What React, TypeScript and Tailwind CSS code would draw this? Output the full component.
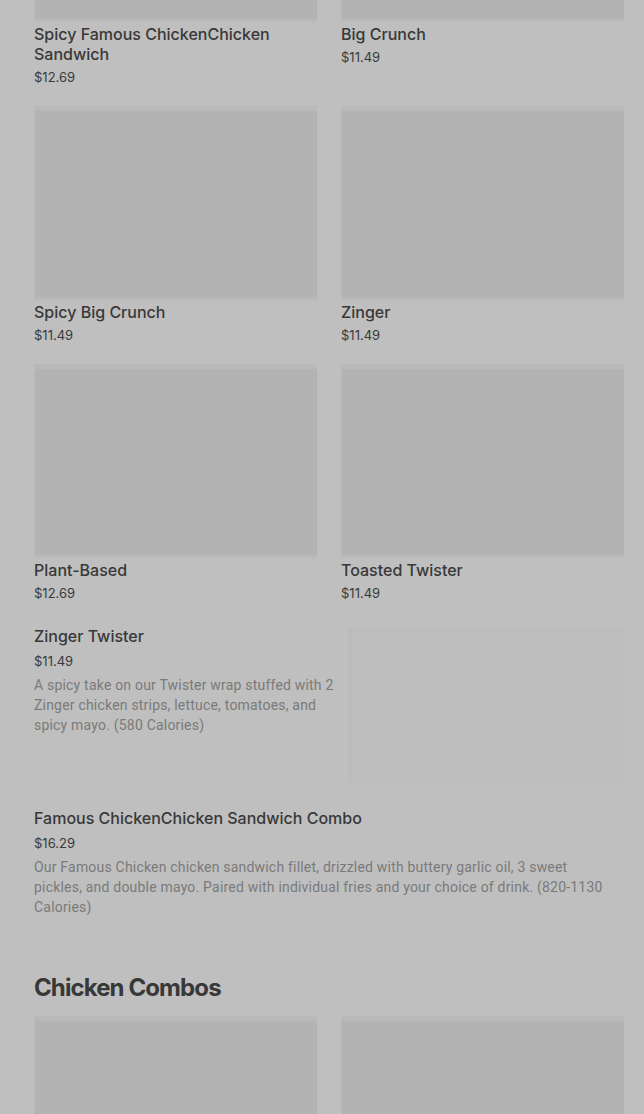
import React from 'react';

interface GridItem {
  name: string;
  price: string;
}

const TOP_ROWS: GridItem[][] = [
  [
    { name: 'Spicy Famous ChickenChicken Sandwich', price: '$12.69' },
    { name: 'Big Crunch', price: '$11.49' },
  ],
  [
    { name: 'Spicy Big Crunch', price: '$11.49' },
    { name: 'Zinger', price: '$11.49' },
  ],
  [
    { name: 'Plant-Based', price: '$12.69' },
    { name: 'Toasted Twister', price: '$11.49' },
  ],
];

const font = { fontFamily: 'Inter, "Noto Sans", sans-serif' };
const descFont = { fontFamily: 'Roboto, "Liberation Sans", sans-serif' };

// image placeholder: lighter frame round a darker fill
const Thumb: React.FC = () => (
  <div className="h-[194px] w-full border-t-[5px] border-b-[3px] border-l-[1px] border-[#b9b9b9] bg-[#b3b3b3]" />
);

const Card: React.FC<{ item: GridItem }> = ({ item }) => (
  <div className="flex flex-col">
    <Thumb />
    <div className="mt-[2px] text-[16px] leading-[20px] font-medium text-[#383838]">{item.name}</div>
    <div className="mt-[5px] text-[13px] leading-[16px] text-[#3a3a3a]">{item.price}</div>
  </div>
);

export default function App() {
  return (
    <div className="min-h-[1114px] w-[644px] overflow-hidden bg-[#bfbfbf] pl-[34px] pr-[20px]" style={font}>
      {/* first row is scrolled so only the bottom of its images shows */}
      <div className="-mt-[172px] flex flex-col gap-[21px]">
        {TOP_ROWS.map((row, i) => (
          <div key={i} className="grid grid-cols-2 gap-x-[24px]">
            {row.map((item) => (
              <Card key={item.name} item={item} />
            ))}
          </div>
        ))}
      </div>

      {/* list item with image on the right */}
      <div className="mt-[25px] flex items-start justify-between">
        <div className="w-[300px]">
          <div className="text-[16px] leading-[20px] font-medium text-[#383838]">Zinger Twister</div>
          <div className="mt-[5px] text-[13px] leading-[20px] text-[#3a3a3a]">$11.49</div>
          <div className="mt-[4px] text-[14px] leading-[20px] tracking-[0.2px] text-[#7a7a7a]" style={descFont}>
            A spicy take on our Twister wrap stuffed with 2 Zinger chicken strips, lettuce, tomatoes, and spicy mayo.&nbsp;(580 Calories)
          </div>
        </div>
        <div className="mt-[2px] h-[155px] w-[276px] bg-[#bebebe] border-l-4 border-t-4 border-[#bbbbbb]" />
      </div>

      <div className="mt-[25px]">
        <div className="text-[16px] leading-[20px] font-medium text-[#383838]">
          Famous ChickenChicken Sandwich Combo
        </div>
        <div className="mt-[5px] text-[13px] leading-[20px] text-[#3a3a3a]">$16.29</div>
        <div className="mt-[4px] w-[570px] text-[14px] leading-[20px] tracking-[0.2px] text-[#7a7a7a]" style={descFont}>
          Our Famous Chicken chicken sandwich fillet, drizzled with buttery garlic oil, 3 sweet pickles, and double mayo. Paired with individual fries and your choice of drink. (820-1130 Calories)
        </div>
      </div>

      <h2 className="mt-[55px] text-[24px] leading-[32px] font-bold tracking-[-0.9px] text-[#383838]">
        Chicken Combos
      </h2>

      <div className="mt-[12px] grid grid-cols-2 gap-x-[24px]">
        <Thumb />
        <Thumb />
      </div>
    </div>
  );
}
